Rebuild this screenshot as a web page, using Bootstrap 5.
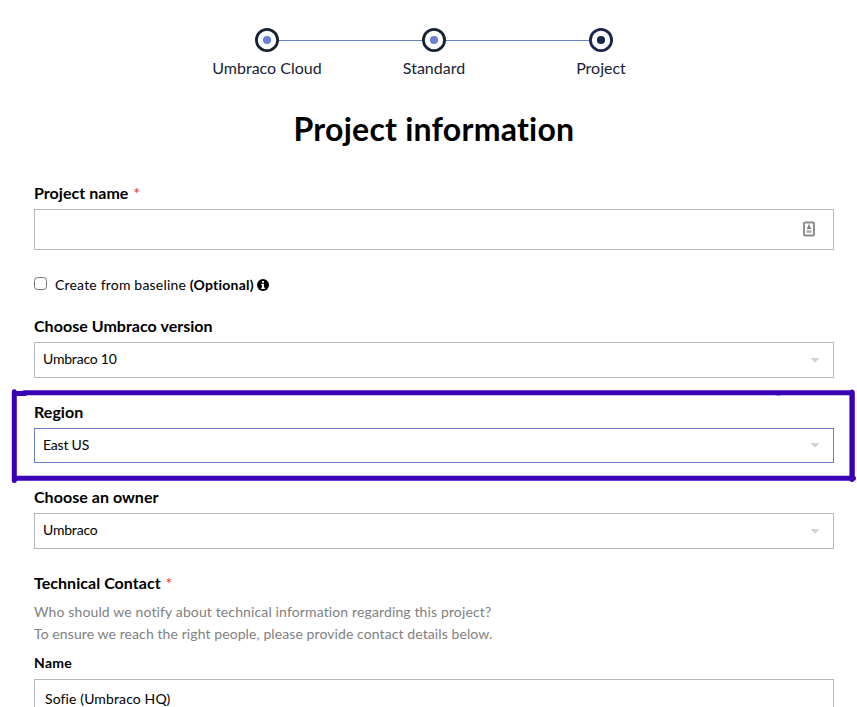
<!DOCTYPE html>
<html lang="en">
<head>
<meta charset="utf-8">
<meta name="viewport" content="width=device-width, initial-scale=1">
<title>Project information</title>
<link rel="stylesheet" href="https://cdn.jsdelivr.net/npm/bootstrap@5.3.0/dist/css/bootstrap.min.css">
<style>
body{font-family:Lato,"Liberation Sans",sans-serif;font-size:14px;line-height:22px;color:#000;background:#fff;height:707px;overflow:hidden;font-variant-ligatures:none}
.page{width:800px;margin-left:34px;padding-top:28px}
.stepper{width:502px}
.step{width:167px;font-size:16px;gap:5px;color:#162335}
.step span{padding-left:1px}
.step svg{display:block;width:100%;height:24px}
.title{font-size:32px;line-height:40px;font-weight:700;letter-spacing:.24px;margin:30px 0 32px}
.field-label{display:block;font-size:16px;line-height:24px;font-weight:700;margin-bottom:4px;letter-spacing:.04px}
.req{color:#f0293e;font-weight:400;margin-left:1px}
.form-control,.form-select{border:1px solid #b8b8bc;font-size:14px;line-height:20px;color:#000;padding:0 8px;background-color:#fff}
.form-control{height:41px;padding:0 10px 2px;letter-spacing:.12px;font-variant-ligatures:normal}
.form-select{height:36px;padding-bottom:2px;letter-spacing:-.2px;background-image:url("data:image/svg+xml,%3Csvg xmlns='http://www.w3.org/2000/svg' viewBox='0 0 10 5'%3E%3Cpath d='M0.5 0h9L5 4.7z' fill='%23d2d2d5'/%3E%3C/svg%3E");background-size:10px 5px;background-position:right 13px top 15px}
.form-select.active-region{height:35px;border-color:#6a80c6;background-position:right 13px top 14px}
.group{margin-bottom:22px}
.baseline{margin:24px 0 18px}
.baseline label{letter-spacing:.19px}
.baseline b{letter-spacing:.22px}
.check{width:13px;height:13px;margin:3px 8px 0 0;border:1px solid #767676;border-radius:2.5px}
.info{margin:4px 0 0 3px}
.outline{left:-24px;top:-14px;width:850px;height:100px;pointer-events:none}
.manager{right:18px;top:12px}
.hint{color:#817f7f;margin:6px 0;letter-spacing:.09px}
.hint span{letter-spacing:.13px}
.small-label{font-size:14px;letter-spacing:.3px}
</style>
<script src="https://cdn.jsdelivr.net/npm/bootstrap@5.3.0/dist/js/bootstrap.bundle.min.js"></script>
</head>
<body>
<main class="page">
  <nav class="stepper d-flex mx-auto" aria-label="Progress">
    <div class="step d-flex flex-column align-items-center">
      <svg viewBox="0 0 167 24"><path d="M95.5 12.5H167" stroke="#6a80c6"/><circle cx="84" cy="12" r="10.6" fill="#fff" stroke="#162335" stroke-width="2.8"/><circle cx="84" cy="12" r="4.1" fill="#6b80d0"/></svg>
      <span>Umbraco Cloud</span>
    </div>
    <div class="step d-flex flex-column align-items-center">
      <svg viewBox="0 0 167 24"><path d="M0 12.5H167" stroke="#6a80c6"/><circle cx="84" cy="12" r="10.6" fill="#fff" stroke="#162335" stroke-width="2.8"/><circle cx="84" cy="12" r="4.1" fill="#6b80d0"/></svg>
      <span>Standard</span>
    </div>
    <div class="step d-flex flex-column align-items-center">
      <svg viewBox="0 0 167 24"><path d="M0 12.5H73" stroke="#6a80c6"/><circle cx="84" cy="12" r="10.6" fill="#fff" stroke="#1b264f" stroke-width="2.8"/><circle cx="84" cy="12" r="4.1" fill="#1b264f"/></svg>
      <span>Project</span>
    </div>
  </nav>
  <h1 class="title text-center">Project information</h1>
  <form>
    <label class="field-label" for="pname">Project name <span class="req">*</span></label>
    <div class="position-relative">
      <input id="pname" type="text" class="form-control rounded-0">
      <svg class="manager position-absolute" width="13" height="16" viewBox="0 0 13 16"><rect x="1" y="1.500" width="10" height="13" rx="1" fill="#fff" stroke="#8c8c8c" stroke-width="1.900"/><path d="M5.300 3.500h1.400v2l1.300 1.600v1H4v-1l1.300-1.600z" fill="#777"/><path d="M3.500 9.300h5v2.500h-5z" fill="#aaa"/></svg>
    </div>
    <div class="baseline d-flex">
      <input id="base" type="checkbox" class="form-check-input check">
      <label for="base">Create from baseline <b>(Optional)</b></label>
      <svg class="info" width="12" height="14" viewBox="0 0 12 14"><circle cx="6" cy="7" r="6" fill="#000"/><path d="M5 3h2v1.700H5zM4.200 5.700H7v3.800h.9V11H4.200V9.500H5V7.200h-.8z" fill="#fff"/></svg>
    </div>
    <div class="group">
      <label class="field-label" for="ver">Choose Umbraco version</label>
      <select id="ver" class="form-select rounded-0"><option>Umbraco 10</option></select>
    </div>
    <div class="group position-relative">
      <label class="field-label" for="reg">Region</label>
      <select id="reg" class="form-select rounded-0 active-region"><option>East US</option></select>
      <svg class="outline position-absolute" viewBox="10 386 850 100" fill="none" stroke="#3c00b4" stroke-width="5" stroke-linecap="round"><path d="M14.300 391.800V480.500M16 393.500H25M24 392.700H852M852.300 392.500V479M14.500 478.200H853.500M851.900 392v87.500M777 392.900h3"/></svg>
    </div>
    <div class="group">
      <label class="field-label" for="own">Choose an owner</label>
      <select id="own" class="form-select rounded-0"><option>Umbraco</option></select>
    </div>
    <div class="field-label mb-0">Technical Contact <span class="req">*</span></div>
    <p class="hint"><span>Who should we notify about technical information regarding this project?</span><br>To ensure we reach the right people, please provide contact details below.</p>
    <label class="field-label small-label" for="cname">Name</label>
    <input id="cname" type="text" class="form-control rounded-0" value="Sofie (Umbraco HQ)">
  </form>
</main>
</body>
</html>
